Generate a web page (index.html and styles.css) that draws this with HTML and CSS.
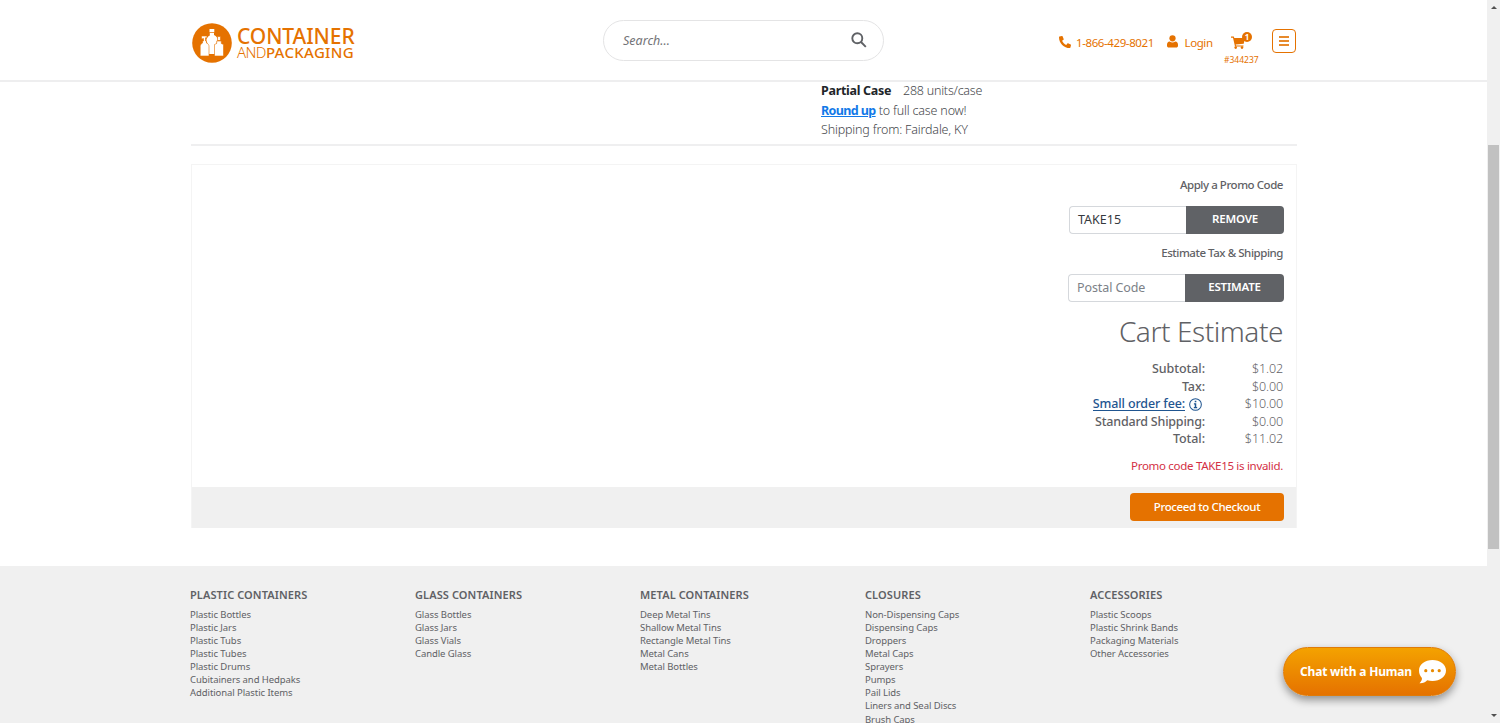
FILE: index.html
```html
<!DOCTYPE html>
<html lang="en">
<head>
<meta charset="utf-8">
<title>Shopping Cart - Container and Packaging</title>
<link rel="stylesheet" href="styles.css">
</head>
<body>
<div class="page">
<header class="header">
<div class="wrap header-row">
<a class="logo">
<svg class="logo-mark" viewBox="0 0 40 40"><circle cx="20" cy="20" r="19.8" fill="#e57200"/><g fill="#fff"><path d="M17.500 6h4.800v3.200h-4.800zM17.800 10h4.200v2c2.600 1.200 3.600 3 3.600 5l-1.600 4.500V31h-8V22l-1.600-4.500c0-2 .8-3.800 3.400-5z"/><path d="M9.500 13h5.500v1.800h-1.500V18h1v2c1.800.8 2.500 2 2.500 3.500V33H8.200v-9.500c0-1.500.8-2.700 2.300-3.500v-2h1v-2.500L9.500 16z" stroke="#e57200" stroke-width=".6"/><path d="M25.600 13.500h2.800v4h-2.800zM24.700 18h4.600v2.500l2.200 1V33h-9V21.500l2.200-1z" stroke="#e57200" stroke-width=".6"/></g></svg>
<span class="logo-text"><span class="logo-top">CONTAINER</span><span class="logo-bottom"><span class="thin">AND</span><span class="heavy">PACKAGING</span></span></span>
</a>
<div class="search"><span class="search-text">Search...</span>
<svg class="search-icon" viewBox="0 0 16 16" fill="none" stroke="#5f6165" stroke-width="1.900"><circle cx="6.300" cy="6.300" r="5"/><path d="M10 10l4.800 4.800"/></svg></div>
<nav class="tools">
<svg class="phone-icon" viewBox="0 0 512 512" fill="#e57200"><path d="M493 24L389 1c-11-3-23 3-28 14l-48 112c-4 10-1 22 7 28l61 50c-36 76-99 139-177 177l-50-61c-7-8-18-11-28-7L14 362C3 367-3 378 0 389l24 104c3 11 13 19 24 19 256 0 464-207 464-464 0-11-8-21-19-24z" transform="matrix(-1 0 0 1 512 0)"/></svg>
<span class="phone">1-866-429-8021</span>
<svg class="user-icon" viewBox="0 0 12 14" fill="#e57200"><circle cx="6" cy="3.500" r="3.400"/><path d="M3 7c1.800 1.300 4.200 1.300 6 0 2 .3 3 1.600 3 3.600v1c0 1.200-.8 2-2 2H2c-1.200 0-2-.8-2-2v-1C0 8.600 1 7.300 3 7z"/></svg>
<span class="login">Login</span>
<div class="cart"><svg class="cart-icon" viewBox="0 0 14 13" fill="#e57200"><path d="M0 .5h2.800l.5 1.500H14l-1.300 5.700-8 .8.300 1h7.500v1.100H4L2 1.800H0z"/><circle cx="4.700" cy="11.600" r="1.300"/><circle cx="11" cy="11.600" r="1.300"/></svg><span class="badge">1</span><span class="cart-id">#344237</span></div>
<button class="menu"><i></i><i></i><i></i></button>
</nav>
</div>
</header>
<main class="wrap">
<section class="item">
<p><b class="case-type">Partial Case</b><span class="units">288 units/case</span></p>
<p><a class="round">Round up</a><span class="full">to full case now!</span></p>
<p><span class="from">Shipping from: Fairdale, KY</span></p>
</section>
<section class="panel">
<label class="label promo-label">Apply a Promo Code</label>
<div class="group promo"><div class="field">TAKE15</div><button class="btn">REMOVE</button></div>
<label class="label ship-label">Estimate Tax &amp; Shipping</label>
<div class="group postal"><div class="field">Postal Code</div><button class="btn">ESTIMATE</button></div>
<h2>Cart Estimate</h2>
<dl class="totals">
<dt>Subtotal:</dt><dd>$1.02</dd>
<dt>Tax:</dt><dd>$0.00</dd>
<dt class="fee"><span>Small order fee:</span><svg class="info" viewBox="0 0 14 14"><circle cx="7" cy="7" r="6.300" fill="none" stroke="#1f5590" stroke-width="1.100"/><path d="M6.200 3h1.700v1.600H6.200zM5.300 5.700h2.500v4h1V11H5.200V9.700h1V7h-.9z" fill="#1f5590"/></svg></dt><dd>$10.00</dd>
<dt class="tight">Standard Shipping:</dt><dd>$0.00</dd>
<dt>Total:</dt><dd>$11.02</dd>
</dl>
<p class="error">Promo code TAKE15 is invalid.</p>
<div class="checkout-bar"><button class="checkout">Proceed to Checkout</button></div>
</section>
</main>
<footer class="footer"><div class="wrap columns">
<div><h3>PLASTIC CONTAINERS</h3><ul><li>Plastic Bottles</li><li>Plastic Jars</li><li>Plastic Tubs</li><li>Plastic Tubes</li><li>Plastic Drums</li><li>Cubitainers and Hedpaks</li><li>Additional Plastic Items</li></ul></div>
<div><h3>GLASS CONTAINERS</h3><ul><li>Glass Bottles</li><li>Glass Jars</li><li>Glass Vials</li><li>Candle Glass</li></ul></div>
<div><h3>METAL CONTAINERS</h3><ul><li>Deep Metal Tins</li><li>Shallow Metal Tins</li><li>Rectangle Metal Tins</li><li>Metal Cans</li><li>Metal Bottles</li></ul></div>
<div><h3>CLOSURES</h3><ul><li>Non-Dispensing Caps</li><li>Dispensing Caps</li><li>Droppers</li><li>Metal Caps</li><li>Sprayers</li><li>Pumps</li><li>Pail Lids</li><li>Liners and Seal Discs</li><li>Brush Caps</li></ul></div>
<div><h3>ACCESSORIES</h3><ul><li>Plastic Scoops</li><li>Plastic Shrink Bands</li><li>Packaging Materials</li><li>Other Accessories</li></ul></div>
</div></footer>
</div>
<aside class="scrollbar"><i class="up"></i><i class="thumb"></i><i class="down"></i></aside>
<button class="chat"><span class="chat-text">Chat with a Human</span><svg class="bubble" viewBox="0 0 27 24"><path d="M13.500 0C21 0 27 4.600 27 10.500S21 21 13.500 21c-1.900 0-3.700-.3-5.300-.8C6.500 22 3.500 23.500.5 23.200c1.500-1.500 2.700-3.500 2.400-5.300C1 16 0 13.500 0 10.500 0 4.600 6 0 13.500 0z" fill="#fff"/><g fill="#e88a00"><circle cx="6.800" cy="10.700" r="1.600"/><circle cx="13.500" cy="10.700" r="1.600"/><circle cx="20.200" cy="10.700" r="1.600"/></g></svg></button>
</body>
</html>
```
FILE: styles.css
```css
* { box-sizing: border-box; }
body { margin: 0; height: 723px; overflow: hidden; display: flex; background: #fff; color: #5f6165; font-family: "Noto Sans", "Open Sans", sans-serif; font-size: 12px; }
p, h2, h3, ul, dl, dd { margin: 0; padding: 0; }
ul { list-style: none; }
button { border: 0; padding: 0; font: inherit; }
span, b, label, .round { white-space: nowrap; }
.page { width: 1487px; height: 723px; overflow: hidden; display: flex; flex-direction: column; flex: none; }
.wrap { width: 1106px; margin: 0 190px 0 191px; }
.header { height: 82px; border-bottom: 2px solid #eeeeef; flex: none; }
.header-row { display: flex; height: 80px; }
.logo { display: flex; width: 412px; padding: 23px 0 0 1px; color: #e57200; }
.logo-mark { width: 40px; height: 40px; }
.logo-text { display: flex; flex-direction: column; margin: 2px 0 0 5px; }
.logo-top { font-size: 21px; line-height: 22px; font-weight: 500; letter-spacing: -.1px; }
.logo-bottom { display: flex; font-size: 15px; line-height: 14px; margin-top: -2px; }
.thin { font-weight: 300; letter-spacing: -.6px; }
.heavy { font-weight: 550; letter-spacing: .3px; }
.search { width: 281px; height: 41px; margin-top: 20px; border: 1px solid #e4e4e5; border-radius: 21px; display: flex; align-items: center; justify-content: space-between; padding: 0 16px 0 19px; }
.search-text { font-size: 12.5px; font-style: italic; color: #737477; }
.search-icon { width: 16px; height: 16px; margin-bottom: 2px; }
.tools { display: flex; align-items: flex-start; flex: 1; margin-left: 175px; color: #e57200; font-size: 11.5px; line-height: 16px; letter-spacing: -.4px; }
.phone-icon { width: 12px; height: 12px; margin-top: 36px; }
.phone { margin: 35px 0 0 5px; width: 78px; }
.user-icon { width: 11px; height: 13px; margin: 35px 0 0 12.500px; }
.login { margin: 35px 0 0 7px; width: 28px; }
.cart { position: relative; margin: 36px 0 0 11.500px; width: 35px; display: flex; flex-direction: column; }
.cart-icon { width: 14px; height: 13px; margin-left: 7px; }
.badge { position: absolute; left: 18px; top: -4px; width: 10px; height: 10px; border-radius: 50%; background: #e57200; color: #fff; font-size: 8px; font-weight: 700; line-height: 10px; text-align: center; letter-spacing: 0; }
.cart-id { font-size: 8.5px; line-height: 11px; margin-top: 5px; letter-spacing: 0; }
.menu { width: 24px; height: 24px; margin: 29px 0 0 12.500px; border: 1px solid #e57200; border-radius: 4px; background: #fff; display: flex; flex-direction: column; align-items: center; justify-content: space-between; padding: 6px 0; }
.menu i { width: 10px; height: 2px; background: #e78a2c; }
.item { display: flow-root; height: 64px; padding-left: 630px; border-bottom: 2px solid #efeff0; color: #45474b; font-size: 12.5px; font-weight: 300; line-height: 19.600px; letter-spacing: -.17px; }
.item p { height: 19.600px; display: flex; margin-top: -1px; margin-bottom: 1px; }
.case-type { font-weight: 700; color: #212529; width: 82px; letter-spacing: -.3px; }
.units { letter-spacing: -.23px; }
.round { font-weight: 700; color: #1279e8; text-decoration: underline; margin-right: 3px; letter-spacing: -.6px; }
.panel { margin-top: 18px; height: 364px; border: 1px solid #f4f4f4; border-bottom: 0; display: flex; flex-direction: column; align-items: flex-end; }
.label { line-height: 18px; font-size: 11.5px; font-weight: 500; margin-right: 13px; letter-spacing: -.45px; }
.promo-label { margin-top: 11px; }
.ship-label { margin-top: 10px; }
.group { display: flex; height: 28px; margin: 12px 12px 0 0; }
.group .field { border: 1px solid #d5d8dc; border-right: 0; border-radius: 4px 0 0 4px; width: 117px; padding-left: 8px; line-height: 26px; font-size: 12.5px; color: #35393e; }
.postal .field { color: #7c8187; letter-spacing: -.1px; }
.btn { width: 98px; border-radius: 0 4px 4px 0; background: #606266; color: #fff; font-size: 11.5px; line-height: 26px; padding-bottom: 2px; font-weight: 600; letter-spacing: -.2px; }
.postal .btn { width: 99px; }
h2 { margin: 11px 13px 0 0; font-size: 28px; line-height: 36px; font-weight: 300; letter-spacing: -.45px; }
.totals { margin: 11px 13px 0 0; display: grid; grid-template-columns: auto 78px; grid-auto-rows: 17.500px; line-height: 17.500px; text-align: right; font-size: 12.5px; }
dt { font-weight: 500; letter-spacing: -.07px; }
.tight { letter-spacing: -.2px; }
dd { font-weight: 300; letter-spacing: -.1px; }
.fee { color: #1f5590; display: flex; justify-content: flex-end; align-items: flex-start; }
.fee span { border-bottom: 1px solid #1f5590; height: 16px; letter-spacing: -.13px; }
.info { width: 13px; height: 13px; margin: 3px 3px 0 4px; }
.error { margin: 9px 13px 0 0; line-height: 18px; font-size: 11.5px; color: #d32f44; letter-spacing: -.3px; }
.checkout-bar { margin-top: auto; height: 41px; align-self: stretch; background: #f0f0f0; display: flex; justify-content: flex-end; padding: 6px 12px 0 0; }
.checkout { width: 154px; height: 28px; border-radius: 4px; background: #e57200; color: #fff; font-size: 11.5px; font-weight: 500; padding-bottom: 2px; letter-spacing: -.4px; }
.footer { margin-top: 38px; flex: 1; background: #f0f0f0; width: 1487px; min-height: 0; }
.columns { display: grid; grid-template-columns: repeat(5, 225px); padding: 20px 0 0; margin-left: 190px; }
h3 { font-size: 11px; line-height: 17px; font-weight: 600; margin-bottom: 4.500px; letter-spacing: .1px; }
li { font-size: 9.500px; line-height: 13.150px; height: 13.150px; white-space: nowrap; letter-spacing: -.08px; }
.scrollbar { width: 13px; height: 723px; background: #f0f0f0; position: relative; }
.thumb { position: absolute; left: 1px; top: 145px; width: 11px; height: 404px; background: #c1c1c1; }
.up, .down { position: absolute; left: 4px; border: 3px solid transparent; }
.up { top: 3px; border-bottom-color: #505050; }
.down { bottom: 3px; border-top-color: #505050; }
.chat { position: absolute; left: 1283px; top: 647px; width: 173px; height: 49px; border-radius: 25px; border: 1px solid #df7b08; background: linear-gradient(#f4a200, #e57200); box-shadow: 0 4px 9px rgba(0,0,0,.4); color: #fff; display: flex; align-items: center; padding-left: 16px; }
.chat-text { font-size: 12px; font-weight: 700; width: 119px; text-align: left; letter-spacing: -.18px; margin-bottom: 1px; }
.bubble { width: 27px; height: 24px; }
```
